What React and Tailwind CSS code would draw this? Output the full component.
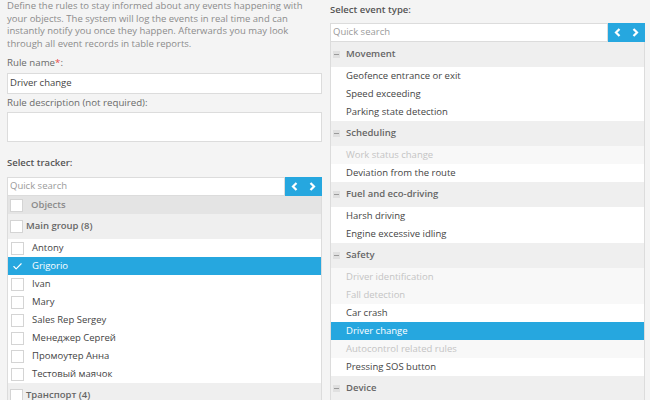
import { Check } from 'lucide-react';

const trackers = [
  { name: 'Antony' },
  { name: 'Grigorio', checked: true },
  { name: 'Ivan' },
  { name: 'Mary' },
  { name: 'Sales Rep Sergey' },
  { name: 'Менеджер Сергей' },
  { name: 'Промоутер Анна' },
  { name: 'Тестовый маячок' },
];

const eventGroups = [
  {
    title: 'Movement',
    items: [{ name: 'Geofence entrance or exit' }, { name: 'Speed exceeding' }, { name: 'Parking state detection' }],
  },
  {
    title: 'Scheduling',
    items: [{ name: 'Work status change', disabled: true }, { name: 'Deviation from the route' }],
  },
  {
    title: 'Fuel and eco-driving',
    items: [{ name: 'Harsh driving' }, { name: 'Engine excessive idling' }],
  },
  {
    title: 'Safety',
    items: [
      { name: 'Driver identification', disabled: true },
      { name: 'Fall detection', disabled: true },
      { name: 'Car crash' },
      { name: 'Driver change', selected: true },
      { name: 'Autocontrol related rules', disabled: true },
      { name: 'Pressing SOS button' },
    ],
  },
  { title: 'Device', items: [] },
];

function Box() {
  return <span className="w-[13px] h-[13px] shrink-0 bg-white border border-[#d4d4d4]" />;
}

function SearchBar() {
  return (
    <div className="flex h-[19px]">
      <div className="flex-1 flex items-center bg-white border border-[#dcdcdc] pl-[2px] text-[#9a9a9a]">
        Quick search
      </div>
      <div className="w-[37px] bg-[#26a7df] flex items-center justify-center gap-[11px]">
        <svg width="7" height="9" viewBox="0 0 7 9" fill="none" stroke="white" strokeWidth="2.2">
          <path d="M5.5 1 L2 4.5 L5.5 8" />
        </svg>
        <svg width="7" height="9" viewBox="0 0 7 9" fill="none" stroke="white" strokeWidth="2.2">
          <path d="M1.5 1 L5 4.5 L1.5 8" />
        </svg>
      </div>
    </div>
  );
}

export default function App() {
  return (
    <div className="w-[650px] h-[400px] overflow-hidden bg-[#f4f4f4] flex items-start gap-[8px] pl-[7px] text-[#333] font-['Open_Sans',sans-serif] text-[9.5px]">
      {/* Left column */}
      <div className="w-[315px] shrink-0">
        <p className="leading-[12.5px] text-[#8c8c8c]">
          Define the rules to stay informed about any events happening with your objects. The system will log the
          events in real time and can instantly notify you once they happen. Afterwards you may look through all
          event records in table reports.
        </p>
        <div className="mt-[6px] text-[9.7px] leading-[14px] text-[#6a6a6a]">
          Rule name<span className="text-[#e84b4b]">*</span>:
        </div>
        <div className="mt-[3px] h-[21px] bg-white border border-[#dcdcdc] flex items-center pl-[2px] text-[#444]">
          Driver change
        </div>
        <div className="mt-[2px] text-[9.7px] leading-[14px] text-[#6a6a6a]">Rule description (not required):</div>
        <div className="mt-[2px] h-[30px] bg-white border border-[#dcdcdc]" />
        <div className="mt-[14px] leading-[14px] font-semibold text-[#555]">Select tracker:</div>
        <div className="mt-[7px]">
          <SearchBar />
        </div>
        <div className="border-x border-[#dcdcdc] bg-white">
          <div className="h-[18px] flex items-center gap-[8px] pl-[2px] bg-[#e4e4e4] text-[#8a8a8a] font-semibold">
            <Box />
            Objects
          </div>
          <div className="h-[25px] flex items-center gap-[3px] pl-[2px] bg-[#efefef] text-[#666] font-semibold">
            <Box />
            Main group (8)
          </div>
          {trackers.map((t) => (
            <div
              key={t.name}
              className={`h-[18px] flex items-center gap-[8px] pl-[3px] ${
                t.checked ? 'bg-[#26a7df] text-white' : 'bg-white text-[#444]'
              }`}
            >
              {t.checked ? (
                <span className="w-[13px] h-[13px] flex items-center justify-center">
                  <Check size={11} strokeWidth={2.5} />
                </span>
              ) : (
                <Box />
              )}
              {t.name}
            </div>
          ))}
          <div className="h-[25px] flex items-center gap-[3px] pl-[2px] bg-[#efefef] text-[#666] font-semibold">
            <Box />
            Транспорт (4)
          </div>
        </div>
      </div>

      {/* Right column */}
      <div className="w-[315px] shrink-0">
        <div className="mt-[3px] leading-[14px] font-semibold text-[#555]">Select event type:</div>
        <div className="mt-[6px]">
          <SearchBar />
        </div>
        <div className="border-x border-[#dcdcdc]">
          {eventGroups.map((g) => (
            <div key={g.title}>
              <div className="h-[25px] flex items-center gap-[6px] pl-[2px] bg-[#efefef] text-[#666] font-semibold">
                <span className="w-[7px] h-[7px] bg-[#e0e0e0] flex items-center justify-center">
                  <span className="w-[5px] h-px bg-[#9a9a9a]" />
                </span>
                {g.title}
              </div>
              {g.items.map((it) => (
                <div
                  key={it.name}
                  className={`h-[18px] flex items-center pl-[15px] ${
                    it.selected
                      ? 'bg-[#26a7df] text-white'
                      : it.disabled
                      ? 'bg-[#f8f8f8] text-[#c4c4c4]'
                      : 'bg-white text-[#444]'
                  }`}
                >
                  {it.name}
                </div>
              ))}
            </div>
          ))}
        </div>
      </div>
    </div>
  );
}
